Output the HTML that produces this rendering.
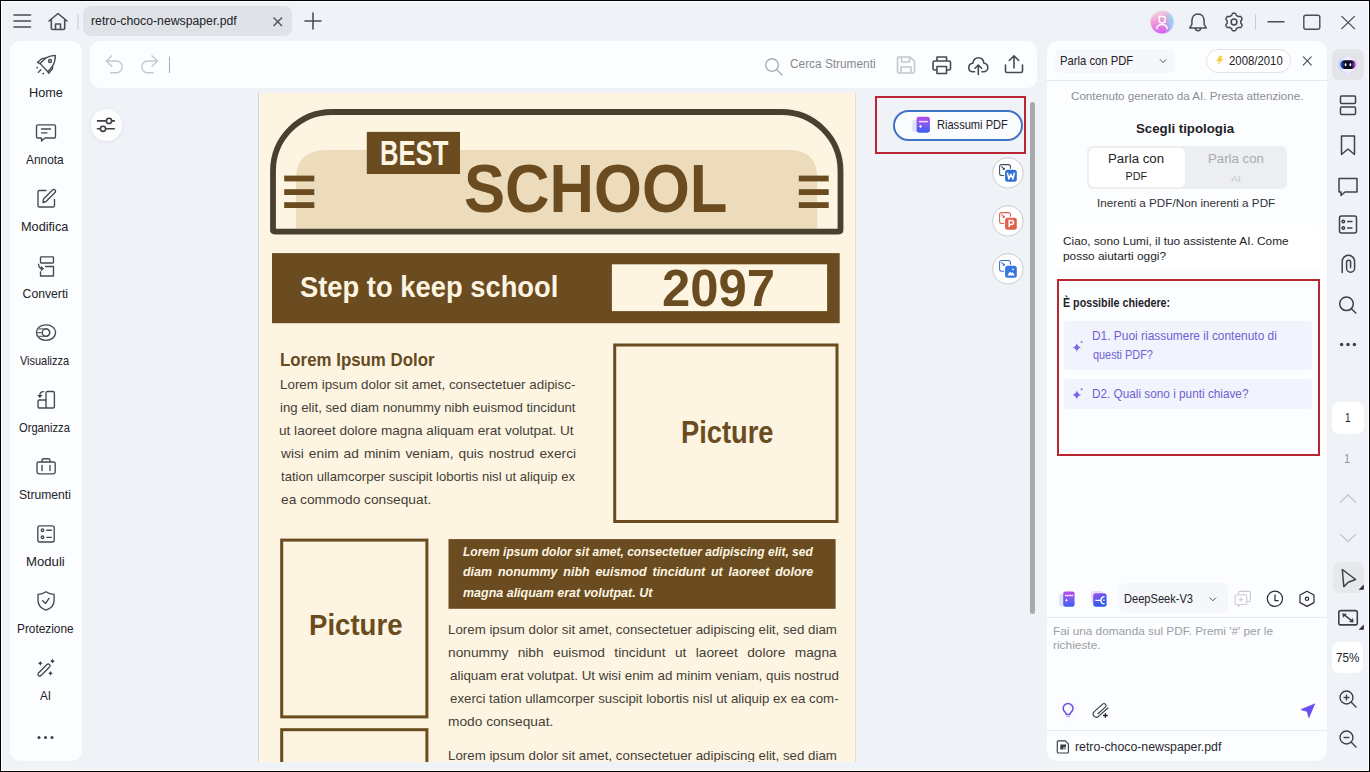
<!DOCTYPE html>
<html><head><meta charset="utf-8">
<style>
*{box-sizing:border-box;margin:0;padding:0}
html,body{width:1370px;height:772px;overflow:hidden}
body{position:relative;background:#eff2f7;font-family:"Liberation Sans",sans-serif;color:#222}
.a{position:absolute;white-space:nowrap}
svg{position:absolute;overflow:visible}
#frame{position:absolute;left:0;top:0;width:1370px;height:772px;border:1px solid #000;z-index:100;pointer-events:none}
#frame2{position:absolute;left:1px;top:1px;width:1368px;height:770px;border:1px solid #fff;z-index:100;pointer-events:none}
.side{position:absolute;left:10px;top:41px;width:72px;height:720px;background:#fcfdfe;border-radius:10px}
.ut{position:absolute;white-space:pre;transform-origin:0 0}
.lbl{position:absolute;left:10px;width:72px;text-align:center;font-size:12.3px;line-height:16px;color:#1f1f25}
.toolbar{position:absolute;left:90px;top:41px;width:947px;height:47px;background:#fcfdfe;border-radius:10px}
.page{position:absolute;left:259px;top:93px;width:596px;height:669px;background:#fdf5e2;overflow:hidden;box-shadow:-1px 0 0 #d3d3d3, 1px 0 0 #dcdde0}
.ai{position:absolute;left:1047px;top:41px;width:280px;height:720px;background:#fcfdfe;border-radius:10px}
.pt{position:absolute;white-space:pre;transform-origin:0 0}
</style></head>
<body>
<div id="frame"></div><div id="frame2"></div>

<!-- ===== TITLE BAR ===== -->
<svg style="left:0;top:0" width="1370" height="40">
  <g stroke="#4a4d55" stroke-width="1.6" fill="none" stroke-linecap="round">
    <line x1="14" y1="15" x2="30.5" y2="15"/><line x1="14" y1="21" x2="30.5" y2="21"/><line x1="14" y1="27" x2="30.5" y2="27"/>
    <path d="M49 21 L58 13.5 L67 21 M51.3 19.2 V28 a1.5 1.5 0 0 0 1.5 1.5 H63.2 a1.5 1.5 0 0 0 1.5 -1.5 V19.2 M55.5 29.5 V24 H60.5 V29.5" stroke-linejoin="round"/>
    <line x1="78" y1="14.5" x2="78" y2="29.5" stroke="#c9ccd2" stroke-width="1"/>
    <!-- plus -->
    <line x1="313" y1="13" x2="313" y2="29" stroke-width="1.6"/><line x1="305" y1="21" x2="321" y2="21" stroke-width="1.6"/>
    <!-- right -->
    <path d="M1198 13.9 C1194 13.9 1191.9 17.3 1191.9 21.1 V24.3 L1189.7 27.9 H1206.3 L1204.1 24.3 V21.1 C1204.1 17.3 1202 13.9 1198 13.9 Z M1195.3 28.1 a2.7 2.7 0 0 0 5.4 0" stroke-linejoin="round" stroke-width="1.5"/>
    <line x1="1255.5" y1="15" x2="1255.5" y2="29.5" stroke="#c9ccd2" stroke-width="1"/>
    <line x1="1268" y1="21.8" x2="1284" y2="21.8" stroke-width="1.4"/>
    <rect x="1303.8" y="15.2" width="16" height="14" rx="2" stroke-width="1.4"/>
    <path d="M1341.8 16.4 L1354.5 28.6 M1354.5 16.4 L1341.8 28.6" stroke-width="1.3"/>
  </g>
  <g transform="translate(1234,22)" stroke="#45484e" stroke-width="1.5" fill="none">
    <path d="M6.90 0.00 L6.90 0.18 L6.89 0.36 L6.88 0.54 L6.86 0.72 L6.84 0.90 L6.85 1.08 L6.93 1.28 L7.08 1.51 L7.30 1.75 L7.53 2.02 L7.76 2.30 L7.95 2.58 L8.06 2.85 L8.09 3.11 L8.04 3.33 L7.95 3.54 L7.85 3.75 L7.75 3.95 L7.65 4.15 L7.53 4.35 L7.42 4.55 L7.30 4.74 L7.17 4.93 L7.04 5.11 L6.90 5.30 L6.74 5.45 L6.50 5.55 L6.21 5.59 L5.87 5.57 L5.52 5.52 L5.16 5.44 L4.85 5.38 L4.58 5.36 L4.36 5.39 L4.20 5.47 L4.06 5.58 L3.91 5.69 L3.76 5.79 L3.61 5.88 L3.45 5.98 L3.29 6.06 L3.13 6.15 L2.97 6.23 L2.81 6.30 L2.64 6.37 L2.48 6.47 L2.35 6.64 L2.24 6.89 L2.13 7.19 L2.02 7.53 L1.89 7.87 L1.74 8.17 L1.56 8.41 L1.36 8.56 L1.14 8.63 L0.91 8.65 L0.68 8.67 L0.46 8.69 L0.23 8.70 L0.00 8.70 L-0.23 8.70 L-0.46 8.69 L-0.68 8.67 L-0.91 8.65 L-1.14 8.63 L-1.36 8.56 L-1.56 8.41 L-1.74 8.17 L-1.89 7.87 L-2.02 7.53 L-2.13 7.19 L-2.24 6.89 L-2.35 6.64 L-2.48 6.47 L-2.64 6.37 L-2.81 6.30 L-2.97 6.23 L-3.13 6.15 L-3.29 6.06 L-3.45 5.98 L-3.61 5.88 L-3.76 5.79 L-3.91 5.69 L-4.06 5.58 L-4.20 5.47 L-4.36 5.39 L-4.58 5.36 L-4.85 5.38 L-5.16 5.44 L-5.52 5.52 L-5.87 5.57 L-6.21 5.59 L-6.50 5.55 L-6.74 5.45 L-6.90 5.30 L-7.04 5.11 L-7.17 4.93 L-7.30 4.74 L-7.42 4.55 L-7.53 4.35 L-7.65 4.15 L-7.75 3.95 L-7.85 3.75 L-7.95 3.54 L-8.04 3.33 L-8.09 3.11 L-8.06 2.85 L-7.95 2.58 L-7.76 2.30 L-7.53 2.02 L-7.30 1.75 L-7.08 1.51 L-6.93 1.28 L-6.85 1.08 L-6.84 0.90 L-6.86 0.72 L-6.88 0.54 L-6.89 0.36 L-6.90 0.18 L-6.90 0.00 L-6.90 -0.18 L-6.89 -0.36 L-6.88 -0.54 L-6.86 -0.72 L-6.84 -0.90 L-6.85 -1.08 L-6.93 -1.28 L-7.08 -1.51 L-7.30 -1.75 L-7.53 -2.02 L-7.76 -2.30 L-7.95 -2.58 L-8.06 -2.85 L-8.09 -3.11 L-8.04 -3.33 L-7.95 -3.54 L-7.85 -3.75 L-7.75 -3.95 L-7.65 -4.15 L-7.53 -4.35 L-7.42 -4.55 L-7.30 -4.74 L-7.17 -4.93 L-7.04 -5.11 L-6.90 -5.30 L-6.74 -5.45 L-6.50 -5.55 L-6.21 -5.59 L-5.87 -5.57 L-5.52 -5.52 L-5.16 -5.44 L-4.85 -5.38 L-4.58 -5.36 L-4.36 -5.39 L-4.20 -5.47 L-4.06 -5.58 L-3.91 -5.69 L-3.76 -5.79 L-3.61 -5.88 L-3.45 -5.98 L-3.29 -6.06 L-3.13 -6.15 L-2.97 -6.23 L-2.81 -6.30 L-2.64 -6.37 L-2.48 -6.47 L-2.35 -6.64 L-2.24 -6.89 L-2.13 -7.19 L-2.02 -7.53 L-1.89 -7.87 L-1.74 -8.17 L-1.56 -8.41 L-1.36 -8.56 L-1.14 -8.63 L-0.91 -8.65 L-0.68 -8.67 L-0.46 -8.69 L-0.23 -8.70 L-0.00 -8.70 L0.23 -8.70 L0.46 -8.69 L0.68 -8.67 L0.91 -8.65 L1.14 -8.63 L1.36 -8.56 L1.56 -8.41 L1.74 -8.17 L1.89 -7.87 L2.02 -7.53 L2.13 -7.19 L2.24 -6.89 L2.35 -6.64 L2.48 -6.47 L2.64 -6.37 L2.81 -6.30 L2.97 -6.23 L3.13 -6.15 L3.29 -6.06 L3.45 -5.98 L3.61 -5.88 L3.76 -5.79 L3.91 -5.69 L4.06 -5.58 L4.20 -5.47 L4.36 -5.39 L4.58 -5.36 L4.85 -5.38 L5.16 -5.44 L5.52 -5.52 L5.87 -5.57 L6.21 -5.59 L6.50 -5.55 L6.74 -5.45 L6.90 -5.30 L7.04 -5.11 L7.17 -4.93 L7.30 -4.74 L7.42 -4.55 L7.53 -4.35 L7.65 -4.15 L7.75 -3.95 L7.85 -3.75 L7.95 -3.54 L8.04 -3.33 L8.09 -3.11 L8.06 -2.85 L7.95 -2.58 L7.76 -2.30 L7.53 -2.02 L7.30 -1.75 L7.08 -1.51 L6.93 -1.28 L6.85 -1.08 L6.84 -0.90 L6.86 -0.72 L6.88 -0.54 L6.89 -0.36 L6.90 -0.18 Z" stroke-linejoin="round"/>
    <circle r="2.9"/>
  </g>
  <defs>
    <linearGradient id="avg" x1="0.2" y1="0" x2="0.5" y2="1">
      <stop offset="0" stop-color="#f8e0e2"/><stop offset="0.45" stop-color="#ef9ad8"/><stop offset="1" stop-color="#d95ff0"/>
    </linearGradient>
    <linearGradient id="avc" x1="0" y1="0" x2="1" y2="0">
      <stop offset="0.6" stop-color="#80e8f6" stop-opacity="0"/><stop offset="1" stop-color="#80e8f6" stop-opacity="1"/>
    </linearGradient>
  </defs>
  <circle cx="1162" cy="22" r="11.5" fill="url(#avg)"/><circle cx="1162" cy="22" r="11.5" fill="url(#avc)"/>
  <g stroke="#fff" stroke-width="1.5" fill="none" stroke-linecap="round"><path d="M1159.2 16.5 H1163.2 a2 2 0 0 1 2 2 V20.2 a2.8 2.8 0 0 1 -2.8 2.8 H1162 a2.8 2.8 0 0 1 -2.8 -2.8 Z"/><path d="M1156.8 28.6 C1157.3 25.8 1159.3 24.6 1162 24.6 C1164.7 24.6 1166.7 25.8 1167.2 28.6"/></g>
</svg>
<div class="a" style="left:83px;top:6px;width:209px;height:30px;background:#dfe2e7;border-radius:8px"></div>
<svg style="left:0;top:0" width="400" height="40"><path d="M273.5 17.5 L282 26 M282 17.5 L273.5 26" stroke="#4a4d55" stroke-width="1.3" fill="none"/></svg>

<!-- ===== LEFT SIDEBAR ===== -->
<div class="side"></div>
<svg style="left:0;top:0" width="90" height="772">
  <g stroke="#45484e" stroke-width="1.35" fill="none" stroke-linecap="round" stroke-linejoin="round">
    <!-- rocket -->
    <path d="M40.1 63.6 L47.9 71.8 L52.5 66.3 C54.5 63 55.5 59 55.3 55.4 C51.5 55.4 48.5 56.5 45.5 58.2 Z"/>
    <path d="M40.1 63.6 L37.4 62.4 L42 58.6 L45.5 58.2 M47.9 71.8 L48.7 73.3 L52.6 68.6 L52.5 66.3"/>
    <circle cx="50" cy="61" r="1.5"/>
    <path d="M38.4 72.4 L40.9 69.8"/>
    <!-- comment -->
    <path d="M38 124.8 H54 a1.5 1.5 0 0 1 1.5 1.5 V136.5 a1.5 1.5 0 0 1 -1.5 1.5 H45 L41.5 141 V138 H38 a1.5 1.5 0 0 1 -1.5 -1.5 V126.3 a1.5 1.5 0 0 1 1.5 -1.5 Z"/>
    <path d="M41.5 129 H50.5 M41.5 132.8 H47"/>
    <!-- modifica -->
    <path d="M46 190.5 H39.5 a1.5 1.5 0 0 0 -1.5 1.5 V205.5 a1.5 1.5 0 0 0 1.5 1.5 H53 a1.5 1.5 0 0 0 1.5 -1.5 V199.5"/>
    <path d="M43 202.5 L43.5 199 L52.5 190 a1.6 1.6 0 0 1 2.5 2.5 L46 201.5 Z"/>
    <!-- converti -->
    <rect x="40.5" y="256.8" width="13" height="6.2" rx="0.8"/>
    <path d="M45.5 266.5 H53.5 V276 H40.5 V271.8"/>
    <path d="M38.6 264.2 Q38.6 268.6 42.5 268.6"/>
    <!-- visualizza -->
    <ellipse cx="46" cy="332.6" rx="9.6" ry="7.8"/>
    <path d="M37.5 328.9 H46 A3.7 3.7 0 0 1 46 336.3 H37.5 M36.8 332.6 H42.3" stroke="#6a6d72"/>
    <circle cx="46" cy="332.6" r="3.7"/>
    <!-- organizza -->
    <rect x="46" y="391.5" width="8.4" height="16.5" rx="1.5"/>
    <path d="M46 400 H39.5 a1.5 1.5 0 0 0 -1.5 1.5 V406.5 a1.5 1.5 0 0 0 1.5 1.5 H46"/>
    <path d="M43.6 391.6 C41 391.6 39.9 392.6 39.9 395"/>
    <!-- strumenti -->
    <rect x="37" y="462" width="18.2" height="11.8" rx="1.8"/>
    <path d="M42 462 V460.5 a1.8 1.8 0 0 1 1.8 -1.8 H48.2 a1.8 1.8 0 0 1 1.8 1.8 V462"/>
    <path d="M42 465.5 V470.5 M50 465.5 V470.5" stroke-width="1.7" stroke="#6a6d72"/>
    <!-- moduli -->
    <rect x="37.8" y="525.8" width="16.4" height="16.2" rx="2"/>
    <circle cx="42.5" cy="530.2" r="1.3"/><circle cx="42.5" cy="537.3" r="1.3"/>
    <path d="M46.8 530.2 H51.3 M46.8 537.3 H51.3"/>
    <!-- protezione -->
    <path d="M46 591.8 C43.5 593.6 41 594.3 38 594.4 V600.5 C38 605 41.5 608.5 46 610.2 C50.5 608.5 54.1 605 54.1 600.5 V594.4 C51 594.3 48.5 593.6 46 591.8 Z"/>
    <path d="M42.6 600.7 L45.6 603.4 L49 598.3"/>
    <!-- AI wand -->
    <g transform="rotate(-45 44 670)"><rect x="36.2" y="668.2" width="15.6" height="3.6" rx="1.8"/></g>
  </g>
  <g fill="#3a3d42">
    <path d="M37.3 63.3 l0 0"/>
    <circle cx="37.2" cy="67.6" r="0.85"/><circle cx="43.2" cy="73.6" r="0.85"/>
    <path d="M37.3 395 H42.5 L39.9 397.9 Z"/>
    <path d="M40.8 268.6 V265.8 L44 268.6 L40.8 271.4 Z" fill="#45484e"/>
    <path d="M40.3 660.9 Q40.827999999999996 662.7719999999999 42.699999999999996 663.3 Q40.827999999999996 663.828 40.3 665.6999999999999 Q39.772 663.828 37.9 663.3 Q39.772 662.7719999999999 40.3 660.9 Z"/><path d="M52.5 658.8000000000001 Q53.028 660.672 54.9 661.2 Q53.028 661.7280000000001 52.5 663.6 Q51.972 661.7280000000001 50.1 661.2 Q51.972 660.672 52.5 658.8000000000001 Z"/><path d="M50.5 670.9 Q51.028 672.7719999999999 52.9 673.3 Q51.028 673.828 50.5 675.6999999999999 Q49.972 673.828 48.1 673.3 Q49.972 672.7719999999999 50.5 670.9 Z"/>
    <circle cx="39" cy="737.5" r="1.5"/><circle cx="45.5" cy="737.5" r="1.5"/><circle cx="52" cy="737.5" r="1.5"/>
  </g>
</svg>

<!-- ===== TOOLBAR ===== -->
<div class="toolbar"></div>
<svg style="left:0;top:0" width="1050" height="150">
  <g stroke="#c4c7cc" stroke-width="1.6" fill="none" stroke-linecap="round" stroke-linejoin="round">
    <path d="M111.8 55.7 L106.3 61 L111.8 66.2 M106.5 61 H116.4 A5.85 5.85 0 0 1 116.4 72.7 H110.7" stroke-width="1.4"/>
    <path d="M152 55.7 L157.5 61 L152 66.2 M157.3 61 H147.6 A5.85 5.85 0 0 0 147.6 72.7 H153.1" stroke-width="1.4"/>
    <line x1="169.5" y1="57.2" x2="169.5" y2="72.7" stroke-width="1" stroke="#a9acb1"/>
    <circle cx="772" cy="65" r="6.3" stroke="#aaadb3" stroke-width="1.4"/><path d="M776.8 69.8 L782 75" stroke="#aaadb3" stroke-width="1.4"/>
    <path d="M899 57 H910 L914.5 61.5 V71.5 a1.5 1.5 0 0 1 -1.5 1.5 H899 a1.5 1.5 0 0 1 -1.5 -1.5 V58.5 a1.5 1.5 0 0 1 1.5 -1.5 Z M901.5 57 V62 H909.5 V57 M901 73 V67 H911 V73"/>
  </g>
  <g stroke="#46494f" stroke-width="1.6" fill="none" stroke-linecap="round" stroke-linejoin="round">
    <path d="M937 61 V57 H946.5 V61 M937 70 H934.5 a1.5 1.5 0 0 1 -1.5 -1.5 V62.5 a1.5 1.5 0 0 1 1.5 -1.5 H949 a1.5 1.5 0 0 1 1.5 1.5 V68.5 a1.5 1.5 0 0 1 -1.5 1.5 H946.5 M937 66.5 H946.5 V73.5 H937 Z"/>
    <path d="M974.5 71.8 H973 C970.3 71.8 968.8 69.8 968.8 67.5 C968.8 65.2 970.5 63.5 972.8 63.3 C973.3 60 975.5 57.8 978.3 57.8 C981.3 57.8 983.6 60 983.9 63.3 C986.2 63.5 987.8 65.2 987.8 67.5 C987.8 69.8 986.2 71.8 983.5 71.8 H982 M978.3 74.5 V65.2 M975 68.3 L978.3 65 L981.6 68.3"/>
    <path d="M1005.5 65 V71 a1.5 1.5 0 0 0 1.5 1.5 H1021 a1.5 1.5 0 0 0 1.5 -1.5 V65 M1014 68 V56 M1009.3 60.5 L1014 55.8 L1018.7 60.5"/>
  </g>
</svg>

<div class="a" style="left:90.5px;top:109.2px;width:31.4px;height:31.4px;border-radius:50%;background:#fdfdfe;box-shadow:0 1px 4px rgba(30,40,60,0.08)"></div>
<svg style="left:0;top:0" width="200" height="200">
  <g stroke="#3c3f45" stroke-width="1.6" fill="none" stroke-linecap="round">
    <path d="M97.5 120.9 H106.3 M111.7 120.9 H114.3 M97.5 128.8 H100.3 M105.7 128.8 H114.3"/>
    <circle cx="109" cy="120.9" r="2.6" fill="#fff"/>
    <circle cx="103" cy="128.8" r="2.6" fill="#fff"/>
  </g>
</svg>
<!-- ===== DOC ===== -->
<div class="page">
<svg style="left:0;top:0" width="597" height="670">
  <path d="M37 135.7 V87 Q37 57 67 57 H530 Q558.2 57 558.2 85 V135.7 Z" fill="#ecdcbc"/>
  <path d="M14 138.6 V78 A59 59 0 0 1 73 19 H522.5 A59 59 0 0 1 581.5 78 V136.6 Q581.5 138.6 579.5 138.6 H16 Q14 138.6 14 136.6 Z" fill="none" stroke="#4a4030" stroke-width="5.8"/>
  <g fill="#6a4c20">
    <rect x="25.19999999999999" y="82.6" width="30.1" height="5.8"/>
    <rect x="25.19999999999999" y="96.19999999999999" width="30.1" height="5.8"/>
    <rect x="25.19999999999999" y="109.19999999999999" width="30.1" height="5.8"/>
    <rect x="539.8" y="82.6" width="29.9" height="5.8"/>
    <rect x="539.8" y="96.19999999999999" width="29.9" height="5.8"/>
    <rect x="539.8" y="109.19999999999999" width="29.9" height="5.8"/>
    <rect x="107.80000000000001" y="38.900000000000006" width="93.2" height="42.1"/>
    <rect x="13" y="160.1" width="567.7" height="70.1"/>
    <rect x="189.5" y="446.1" width="387.1" height="69.7"/>
  </g>
  <rect x="352.9" y="171.3" width="215.2" height="46.8" fill="#fdf5e2"/>
  <g fill="none" stroke="#6a4c20" stroke-width="3">
    <rect x="355.70000000000005" y="252" width="222.3" height="176.5"/>
    <rect x="22.69999999999999" y="447.1" width="145.2" height="176.8"/>
    <rect x="22.69999999999999" y="636.7" width="145.2" height="100"/>
  </g>
</svg>
<div class="pt" style="left:120.85px;top:39.17px;font-size:35.32px;line-height:42.38px;width:94.14px;color:#fdf5e2;transform:scaleX(0.7250);font-weight:700;">BEST</div>
<div class="pt" style="left:204.60px;top:55.26px;font-size:68.60px;line-height:82.33px;width:293.44px;color:#6a4c20;transform:scaleX(0.8979);font-weight:700;">SCHOOL</div>
<div class="pt" style="left:40.57px;top:176.41px;font-size:29.36px;line-height:35.23px;width:277.34px;color:#fdf5e2;transform:scaleX(0.9316);font-weight:700;">Step to keep school</div>
<div class="pt" style="left:403.04px;top:164.23px;font-size:51.74px;line-height:62.09px;width:115.09px;color:#6a4c20;transform:scaleX(0.9820);font-weight:700;">2097</div>
<div class="pt" style="left:21.33px;top:256.99px;font-size:17.44px;line-height:20.93px;width:159.86px;color:#654a22;transform:scaleX(0.9667);font-weight:700;">Lorem Ipsum Dolor</div>
<div class="pt" style="left:422.01px;top:321.01px;font-size:30.52px;line-height:36.63px;width:103.45px;color:#6a4c20;transform:scaleX(0.8931);font-weight:700;">Picture</div>
<div class="pt" style="left:50.05px;top:513.70px;font-size:29.80px;line-height:35.76px;width:100.97px;color:#6a4c20;transform:scaleX(0.9255);font-weight:700;">Picture</div>
<div class="pt" style="left:20.51px;top:285.01px;font-size:12.25px;line-height:14.7px;width:270.30px;color:#443e37;transform:scaleX(1.0929);">Lorem ipsum dolor sit amet, consectetuer adipisc-</div>
<div class="pt" style="left:20.52px;top:308.01px;font-size:12.25px;line-height:14.7px;width:274.42px;color:#443e37;transform:scaleX(1.0769);">ing elit, sed diam nonummy nibh euismod tincidunt</div>
<div class="pt" style="left:20.49px;top:331.01px;font-size:12.25px;line-height:14.7px;width:265.58px;color:#443e37;transform:scaleX(1.1094);">ut laoreet dolore magna aliquam erat volutpat. Ut</div>
<div class="pt" style="left:21.60px;top:354.01px;font-size:12.25px;line-height:14.7px;width:263.48px;color:#443e37;transform:scaleX(1.1200);text-align:justify;text-align-last:justify;">wisi enim ad minim veniam, quis nostrud exerci</div>
<div class="pt" style="left:21.60px;top:377.01px;font-size:12.25px;line-height:14.7px;width:275.08px;color:#443e37;transform:scaleX(1.0691);">tation ullamcorper suscipit lobortis nisl ut aliquip ex</div>
<div class="pt" style="left:21.60px;top:400.01px;font-size:12.25px;line-height:14.7px;width:134.16px;color:#443e37;transform:scaleX(1.1200);">ea commodo consequat.</div>
<div class="pt" style="left:203.80px;top:450.50px;font-size:13.00px;line-height:15.6px;width:378.55px;color:#fdf5e2;transform:scaleX(0.9240);font-weight:700;font-style:italic;">Lorem ipsum dolor sit amet, consectetuer adipiscing elit, sed</div>
<div class="pt" style="left:203.80px;top:471.40px;font-size:13.00px;line-height:15.6px;width:364.92px;color:#fdf5e2;transform:scaleX(0.9600);font-weight:700;font-style:italic;text-align:justify;text-align-last:justify;">diam nonummy nibh euismod tincidunt ut laoreet dolore</div>
<div class="pt" style="left:203.80px;top:492.30px;font-size:13.00px;line-height:15.6px;width:197.20px;color:#fdf5e2;transform:scaleX(0.9600);font-weight:700;font-style:italic;">magna aliquam erat volutpat. Ut</div>
<div class="pt" style="left:189.41px;top:530.41px;font-size:12.25px;line-height:14.7px;width:358.14px;color:#443e37;transform:scaleX(1.0860);">Lorem ipsum dolor sit amet, consectetuer adipiscing elit, sed diam</div>
<div class="pt" style="left:189.38px;top:553.31px;font-size:12.25px;line-height:14.7px;width:347.05px;color:#443e37;transform:scaleX(1.1200);text-align:justify;text-align-last:justify;">nonummy nibh euismod tincidunt ut laoreet dolore magna</div>
<div class="pt" style="left:190.50px;top:576.21px;font-size:12.25px;line-height:14.7px;width:356.09px;color:#443e37;transform:scaleX(1.0921);">aliquam erat volutpat. Ut wisi enim ad minim veniam, quis nostrud</div>
<div class="pt" style="left:190.50px;top:599.11px;font-size:12.25px;line-height:14.7px;width:358.81px;color:#443e37;transform:scaleX(1.0830);">exerci tation ullamcorper suscipit lobortis nisl ut aliquip ex ea com-</div>
<div class="pt" style="left:189.38px;top:622.01px;font-size:12.25px;line-height:14.7px;width:93.98px;color:#443e37;transform:scaleX(1.1200);">modo consequat.</div>
<div class="pt" style="left:189.41px;top:655.81px;font-size:12.25px;line-height:14.7px;width:358.14px;color:#443e37;transform:scaleX(1.0860);">Lorem ipsum dolor sit amet, consectetuer adipiscing elit, sed diam</div>
</div>
<!-- ===== RIASS ===== -->
<div class="a" style="left:1030px;top:102px;width:5px;height:512px;background:#a8a9ad;border-radius:2.5px"></div>
<div class="a" style="left:875px;top:96px;width:151px;height:57.5px;border:2px solid #bb2530"></div>
<div class="a" style="left:893px;top:109.5px;width:130px;height:31px;border:2px solid #4073c6;border-radius:16px;background:#fbfcfe"></div>
<svg style="left:0;top:0" width="1370" height="772">
  <defs><linearGradient id="g3" x1="0" y1="0" x2="0" y2="1"><stop offset="0" stop-color="#b84ae6"/><stop offset="0.5" stop-color="#7d5cf2"/><stop offset="1" stop-color="#3a5ef0"/></linearGradient></defs>
  <rect x="912.2" y="120.1" width="6" height="12.1" rx="1.8" fill="#dfe3f7"/>
  <rect x="916.6" y="116.7" width="13.3" height="16" rx="2.4" fill="url(#g3)"/>
  <path d="M918.9 121.6 H927.9" stroke="#f7dcff" stroke-width="1.5"/>
  <path d="M920.5 124.4 Q920.8 126 922.4 126.3 Q920.8 126.6 920.5 128.2 Q920.2 126.6 918.6 126.3 Q920.2 126 920.5 124.4 Z" fill="#fff"/>
  <g transform="translate(0,0.0)">
    <circle cx="1007.9" cy="172.9" r="15.3" fill="#fff" stroke="#c9cbcf" stroke-width="1"/>
    <rect x="999.6" y="164.6" width="10.8" height="10.8" rx="2" fill="none" stroke="#3e4a66" stroke-width="1.05"/>
    <path d="M1001.4 166.4 L1004.3 169.3" stroke="#3e4a66" stroke-width="1.05"/>
    <path d="M1004.9 167.3 V169.9 H1002.3 Z" fill="#3e4a66"/>
    <rect x="1004.1" y="168.8" width="13.7" height="14" rx="3" fill="#fff"/>
    <rect x="1005.1" y="169.8" width="11.7" height="12" rx="2.5" fill="#2f6fd6"/>
    <path d="M1007.4 172.6 L1008.9 179 L1010.9 174.2 L1012.9 179 L1014.4 172.6" stroke="#fff" stroke-width="1.5" fill="none" stroke-linejoin="round"/>
  </g>
<g transform="translate(0,48.0)">
    <circle cx="1007.9" cy="172.9" r="15.3" fill="#fff" stroke="#c9cbcf" stroke-width="1"/>
    <rect x="999.6" y="164.6" width="10.8" height="10.8" rx="2" fill="none" stroke="#d9604e" stroke-width="1.05"/>
    <path d="M1001.4 166.4 L1004.3 169.3" stroke="#d9604e" stroke-width="1.05"/>
    <path d="M1004.9 167.3 V169.9 H1002.3 Z" fill="#d9604e"/>
    <rect x="1004.1" y="168.8" width="13.7" height="14" rx="3" fill="#fff"/>
    <rect x="1005.1" y="169.8" width="11.7" height="12" rx="2.5" fill="#e0604a"/>
    <path d="M1009.2 179.2 V172.6 H1011.6 A1.9 1.9 0 0 1 1011.6 176.4 H1009.2" stroke="#fff" stroke-width="1.5" fill="none"/>
  </g>
<g transform="translate(0,95.9)">
    <circle cx="1007.9" cy="172.9" r="15.3" fill="#fff" stroke="#c9cbcf" stroke-width="1"/>
    <rect x="999.6" y="164.6" width="10.8" height="10.8" rx="2" fill="none" stroke="#3a6bc8" stroke-width="1.05"/>
    <path d="M1001.4 166.4 L1004.3 169.3" stroke="#3a6bc8" stroke-width="1.05"/>
    <path d="M1004.9 167.3 V169.9 H1002.3 Z" fill="#3a6bc8"/>
    <rect x="1004.1" y="168.8" width="13.7" height="14" rx="3" fill="#fff"/>
    <rect x="1005.1" y="169.8" width="11.7" height="12" rx="2.5" fill="#3575e0"/>
    <path d="M1007.3 179.6 L1010 175.6 L1011.6 177.4 L1012.7 176.2 L1014.8 179.6 Z" fill="#fff"/><circle cx="1013" cy="173.4" r="0.9" fill="#fff"/>
  </g>
</svg>

<!-- ===== AI PANEL ===== -->
<div class="ai"></div>
<div class="a" style="left:1055px;top:49px;width:120px;height:24px;background:#f6f7fa;border-radius:6px"></div>
<div class="a" style="left:1206px;top:49px;width:85px;height:24px;border:1px solid #dfe2e8;border-radius:12px;background:#fff"></div>
<svg style="left:0;top:0" width="1370" height="772">
  <path d="M1160 59.3 L1163.1 62.6 L1166.2 59.3" stroke="#55585e" stroke-width="1" fill="none"/>
  <path d="M1219.6 56 L1216.6 60.9 H1219.3 L1218.2 64.3 L1223.1 59.1 H1220.4 L1222.2 56 Z" fill="#f4cf48" stroke="#f4cf48" stroke-width="0.6" stroke-linejoin="round"/>
  <path d="M1303 56.5 L1311.6 65.4 M1311.6 56.5 L1303 65.4" stroke="#3a3d43" stroke-width="1.05" fill="none"/>
  <line x1="1046" y1="80.5" x2="1327" y2="80.5" stroke="#e6e9ee" stroke-width="1"/>
</svg>
<div class="a" style="left:1087px;top:146px;width:200px;height:43px;background:#eceef2;border-radius:6px"></div>
<div class="a" style="left:1089px;top:148px;width:96px;height:39px;background:#fff;border-radius:5px"></div>
<div class="a" style="left:1054.5px;top:225px;width:265px;height:43px;background:#fff;border-radius:6px"></div>
<div class="a" style="left:1057px;top:278.5px;width:263px;height:177.5px;border:2px solid #bb2530"></div>
<div class="a" style="left:1064px;top:321px;width:248px;height:49px;background:#f1f3fd;border-radius:3px"></div>
<div class="a" style="left:1064px;top:379px;width:248px;height:30px;background:#f1f3fd;border-radius:3px"></div>
<svg style="left:0;top:0" width="1370" height="772">
  <g fill="#7a67e6">
    <path d="M1076.8 343.3 Q1077.66 346.74 1081.1 347.6 Q1077.66 348.46 1076.8 351.90000000000003 Q1075.94 348.46 1072.5 347.6 Q1075.94 346.74 1076.8 343.3 Z"/><circle cx="1081.6" cy="341.9" r="0.95"/>
    <path d="M1076.8 390.59999999999997 Q1077.66 394.04 1081.1 394.9 Q1077.66 395.76 1076.8 399.2 Q1075.94 395.76 1072.5 394.9 Q1075.94 394.04 1076.8 390.59999999999997 Z"/><circle cx="1081.6" cy="389.2" r="0.95"/>
  </g>
</svg>
<!-- bottom -->
<div class="a" style="left:1119px;top:583px;width:109px;height:30px;background:#f6f7fa;border-radius:6px"></div>
<svg style="left:0;top:0" width="1370" height="772">
  <defs>
    <linearGradient id="g1" x1="0" y1="0" x2="0" y2="1"><stop offset="0" stop-color="#b84ae6"/><stop offset="0.5" stop-color="#7d5cf2"/><stop offset="1" stop-color="#3a5ef0"/></linearGradient>
    <linearGradient id="g2" x1="0" y1="0" x2="0.4" y2="1"><stop offset="0" stop-color="#a34ee8"/><stop offset="0.5" stop-color="#5a5cf0"/><stop offset="1" stop-color="#2c5ee8"/></linearGradient>
  </defs>
  <rect x="1059.3" y="594" width="6" height="12.4" rx="1.8" fill="#dfe3f7"/>
  <rect x="1063.2" y="591.6" width="11.4" height="15.1" rx="2.2" fill="url(#g1)"/>
  <path d="M1064.9 595.5 H1073.2" stroke="#f6dcff" stroke-width="1.5"/>
  <path d="M1066.5 598.6 Q1066.8 600 1068.1 600.3 Q1066.8 600.6 1066.5 602 Q1066.2 600.6 1064.9 600.3 Q1066.2 600 1066.5 598.6 Z" fill="#fff"/>
  <rect x="1091.2" y="591.1" width="12" height="12" rx="2.5" fill="#e6def8"/>
  <rect x="1093.2" y="593.3" width="13.4" height="13.4" rx="2.6" fill="url(#g2)"/>
  <path d="M1103.6 596.6 A3.9 3.9 0 0 0 1103.6 604 M1095.4 600.3 H1100.6" stroke="#fff" stroke-width="1.3" fill="none"/>
  <g fill="#fff"><circle cx="1103.9" cy="596.8" r="0.8"/><circle cx="1103.9" cy="600.3" r="0.8"/><circle cx="1103.9" cy="603.8" r="0.8"/></g>
  <path d="M1209.7 597.6 L1212.9 600.8 L1216.1 597.6" stroke="#55585e" stroke-width="1" fill="none"/>
  <g stroke="#c9cbd0" stroke-width="1.1" fill="none" stroke-linejoin="round">
    <path d="M1238.6 594.6 V593 a1.6 1.6 0 0 1 1.6 -1.6 H1248.8 a1.6 1.6 0 0 1 1.6 1.6 V600.2 a1.6 1.6 0 0 1 -1.6 1.6 H1246.9"/>
    <path d="M1236.7 594.8 H1245.2 a1.6 1.6 0 0 1 1.6 1.6 V602.9 a1.6 1.6 0 0 1 -1.6 1.6 H1240 L1238.3 606.3 V604.5 H1236.7 a1.6 1.6 0 0 1 -1.6 -1.6 V596.4 a1.6 1.6 0 0 1 1.6 -1.6 Z"/>
    <path d="M1241 597.5 V601.7 M1238.9 599.6 H1243.1"/>
  </g>
  <g stroke="#2a2c31" stroke-width="1.2" fill="none" stroke-linejoin="round">
    <circle cx="1274.9" cy="598.8" r="7.6"/>
    <path d="M1275 594.6 V600.7 H1278.6"/>
    <path d="M1307 591.2 L1314 595 V602.6 L1307 606.4 L1300 602.6 V595 Z"/>
    <circle cx="1307" cy="598.8" r="1.7"/>
  </g>
  <line x1="1046" y1="617.5" x2="1327" y2="617.5" stroke="#e9ebef" stroke-width="1"/>
  <line x1="1046" y1="730.5" x2="1327" y2="730.5" stroke="#e9ebef" stroke-width="1"/>
  <circle cx="1068" cy="710" r="11.5" fill="#fafbfd"/>
  <path d="M1301 709.6 L1314.7 703.9 L1308.9 717.6 L1307.2 711.4 Z" fill="#6a4ef2" stroke="#6a4ef2" stroke-width="0.8" stroke-linejoin="round"/>
  <g stroke="#6651d8" stroke-width="1.5" fill="none" stroke-linejoin="round">
    <path d="M1066.4 714.6 C1066.2 712.4 1063.2 711.4 1063.2 708.4 a4.9 4.9 0 0 1 9.8 0 C1073 711.4 1070 712.4 1069.8 714.6 Z"/>
  </g>
  <path d="M1066.3 716.7 H1069.9" stroke="#b3a8ee" stroke-width="1.2"/>
  <path d="M1069.2 705.6 a2.8 2.8 0 0 1 1.6 2" stroke="#c9c0f5" stroke-width="0.9" fill="none"/>
  <g transform="translate(2.2,2.2) rotate(-42 1100.3 710.7)" stroke="#3a3d43" stroke-width="1.15" fill="none">
    <path d="M1108 710.7 H1095 a3.2 3.2 0 0 1 0 -6.4 H1106.3 a2 2 0 0 1 0 4 H1096"/>
  </g>
  <path d="M1105.4 713.2 V717.8 M1103.1 715.5 H1107.7" stroke="#1e1e22" stroke-width="1.3"/>
  <path d="M1058.3 740.8 H1065.3 L1068.4 743.9 V752 a1 1 0 0 1 -1 1 H1058.3 a1 1 0 0 1 -1 -1 V741.8 a1 1 0 0 1 1 -1 Z" stroke="#3a3d43" stroke-width="1.15" fill="none"/>
  <path d="M1060.3 744.5 H1066 V747 H1063 V749.6 H1060.3 Z" fill="#3a3d43"/>
  <rect x="1063" y="747" width="3" height="2.6" fill="#9a9ca0"/>
</svg>


<!-- ===== RIGHT STRIP ===== -->
<div class="a" style="left:1332.3px;top:49px;width:31.3px;height:30.6px;background:#e3e5e9;border-radius:7px"></div>
<svg style="left:0;top:0" width="1370" height="772">
  <defs>
    <radialGradient id="rb" cx="0.5" cy="0.5" r="0.5"><stop offset="0.6" stop-color="#f4f0ff"/><stop offset="1" stop-color="#e6e4f6"/></radialGradient>
    <linearGradient id="rbe" x1="0" y1="0" x2="1" y2="0"><stop offset="0" stop-color="#a8d4ff"/><stop offset="0.5" stop-color="#e8e4ff"/><stop offset="1" stop-color="#f7c0ee"/></linearGradient>
    <linearGradient id="pill" x1="0" y1="0" x2="1" y2="0"><stop offset="0" stop-color="#4060e0"/><stop offset="0.28" stop-color="#0c0c26"/><stop offset="0.72" stop-color="#0c0c26"/><stop offset="1" stop-color="#b060e0"/></linearGradient>
  </defs>
  <circle cx="1348" cy="64.7" r="9" fill="url(#rb)" stroke="url(#rbe)" stroke-width="1.2"/>
  <rect x="1340.2" y="60.2" width="15.6" height="8.8" rx="4.4" fill="url(#pill)"/>
  <ellipse cx="1345.6" cy="64.7" rx="0.95" ry="1.45" fill="#fff"/>
  <ellipse cx="1350.3" cy="64.7" rx="0.95" ry="1.45" fill="#fff"/>
  <g stroke="#3f4248" stroke-width="1.5" fill="none" stroke-linejoin="round">
    <rect x="1340.5" y="96" width="15" height="7.5" rx="1"/>
    <rect x="1340.5" y="107" width="15" height="7.5" rx="1"/>
    <path d="M1341.5 136 H1354.5 V154.5 L1348 149 L1341.5 154.5 Z"/>
    <path d="M1339 178.5 H1357 V192 H1345 L1341 195.5 V192 H1339 Z"/>
    <rect x="1339.5" y="216" width="17" height="17" rx="2"/>
    <path d="M1347 221.5 H1352.5 M1347 228 H1352.5"/>
    <circle cx="1343.3" cy="221.5" r="1.3"/><circle cx="1343.3" cy="228" r="1.3"/>
    <path d="M1342.2 272.5 V261.5 A6.2 6.2 0 0 1 1354.6 261.5 V268.2 A4 4 0 0 1 1346.6 268.2 V262.3 A2 2 0 0 1 1350.6 262.3 V267.5" stroke-linecap="round"/>
    <circle cx="1346.5" cy="303.8" r="6.8"/><path d="M1351.4 308.7 L1355.8 313" stroke-linecap="round"/>
  </g>
  <g fill="#3f4248"><circle cx="1341.6" cy="344.6" r="1.75"/><circle cx="1348" cy="344.6" r="1.75"/><circle cx="1354.4" cy="344.6" r="1.75"/></g>
</svg>
<div class="a" style="left:1332px;top:402px;width:32px;height:32px;background:#fff;border-radius:7px"></div>
<div class="a" style="left:1332.5px;top:562.3px;width:31.3px;height:31px;background:#e6e8ec;border-radius:7px"></div>
<svg style="left:0;top:0" width="1370" height="772">
  <g stroke="#c4c7cc" stroke-width="1.3" fill="none">
    <path d="M1340 502.5 L1348 495 L1356 502.5"/>
    <path d="M1340 534 L1348 541.5 L1356 534"/>
  </g>
  <g stroke="#3f4248" stroke-width="1.4" fill="none" stroke-linejoin="round">
    <path d="M1342.3 569.5 L1355.6 579.5 L1348.3 582.3 L1343.8 586.6 Z" stroke-width="1.5"/>
    <rect x="1338.8" y="610.6" width="18.5" height="14.3" rx="2" stroke-width="1.6"/><path d="M1342.3 613.3 L1346.8 613.9 L1342.9 617.8 Z M1353.6 622.4 L1349 621.9 L1353 618 Z" fill="#3f4248" stroke="none"/>
    <path d="M1344 614.6 L1352.2 621.2" stroke-width="1.5"/>
    <circle cx="1346.5" cy="697.5" r="6.5"/><path d="M1351.3 702.3 L1356 707" stroke-linecap="round"/><path d="M1343.5 697.5 H1349.5 M1346.5 694.5 V700.5"/>
    <circle cx="1346.5" cy="737.5" r="6.5"/><path d="M1351.3 742.3 L1356 747" stroke-linecap="round"/><path d="M1343.5 737.5 H1349.5"/>
  </g>
  <path d="M1363.8 584.5 V589.7 H1358.6 Z" fill="#2a2d33"/>
  <path d="M1363.8 624.6 V629.8 H1358.6 Z" fill="#2a2d33"/>
</svg>
<div class="a" style="left:1332px;top:642px;width:31px;height:31px;background:#fff;border-radius:7px"></div>

<!-- ===== UITEXT ===== -->
<div class="ut" style="left:90.82px;top:14.46px;font-size:12.50px;line-height:15.62px;color:#222228;transform:scaleX(0.9804);">retro-choco-newspaper.pdf</div>
<div class="ut" style="left:28.56px;top:85.75px;font-size:12.20px;line-height:15.25px;color:#222228;transform:scaleX(1.0419);">Home</div>
<div class="ut" style="left:26.30px;top:152.75px;font-size:12.20px;line-height:15.25px;color:#222228;transform:scaleX(0.9744);">Annota</div>
<div class="ut" style="left:21.46px;top:219.75px;font-size:12.20px;line-height:15.25px;color:#222228;transform:scaleX(1.0432);">Modifica</div>
<div class="ut" style="left:22.60px;top:286.75px;font-size:12.20px;line-height:15.25px;color:#222228;transform:scaleX(1.0000);">Converti</div>
<div class="ut" style="left:20.40px;top:353.75px;font-size:12.20px;line-height:15.25px;color:#222228;transform:scaleX(0.8982);">Visualizza</div>
<div class="ut" style="left:18.98px;top:420.75px;font-size:12.20px;line-height:15.25px;color:#222228;transform:scaleX(0.9164);">Organizza</div>
<div class="ut" style="left:18.61px;top:487.75px;font-size:12.20px;line-height:15.25px;color:#222228;transform:scaleX(0.9941);">Strumenti</div>
<div class="ut" style="left:25.52px;top:554.75px;font-size:12.20px;line-height:15.25px;color:#222228;transform:scaleX(1.0794);">Moduli</div>
<div class="ut" style="left:16.63px;top:621.75px;font-size:12.20px;line-height:15.25px;color:#222228;transform:scaleX(0.9702);">Protezione</div>
<div class="ut" style="left:40.00px;top:688.75px;font-size:12.20px;line-height:15.25px;color:#222228;transform:scaleX(0.9545);">AI</div>
<div class="ut" style="left:789.85px;top:57.37px;font-size:12.48px;line-height:15.6px;color:#86898f;transform:scaleX(0.9500);">Cerca Strumenti</div>
<div class="ut" style="left:936.90px;top:117.51px;font-size:12.34px;line-height:15.43px;color:#222228;transform:scaleX(0.8987);">Riassumi PDF</div>
<div class="ut" style="left:1059.65px;top:53.82px;font-size:11.92px;line-height:14.9px;color:#222228;transform:scaleX(0.9461);">Parla con PDF</div>
<div class="ut" style="left:1229.25px;top:53.82px;font-size:11.92px;line-height:14.9px;color:#222228;transform:scaleX(0.9545);">2008/2010</div>
<div class="ut" style="left:1070.70px;top:89.91px;font-size:10.80px;line-height:13.5px;color:#8b8e94;transform:scaleX(1.0753);">Contenuto generato da AI. Presta attenzione.</div>
<div class="ut" style="left:1136.28px;top:120.73px;font-size:13.04px;line-height:16.31px;color:#222226;transform:scaleX(1.0177);font-weight:700;">Scegli tipologia</div>
<div class="ut" style="left:1107.60px;top:150.65px;font-size:13.32px;line-height:16.66px;color:#222226;transform:scaleX(0.9982);">Parla con</div>
<div class="ut" style="left:1125.60px;top:169.91px;font-size:10.80px;line-height:13.5px;color:#222226;transform:scaleX(1.0000);">PDF</div>
<div class="ut" style="left:1207.51px;top:150.65px;font-size:13.32px;line-height:16.66px;color:#a8abb1;transform:scaleX(0.9927);">Parla con</div>
<div class="ut" style="left:1231.40px;top:172.90px;font-size:9.68px;line-height:12.1px;color:#c3c6cb;transform:scaleX(1.0778);">AI</div>
<div class="ut" style="left:1097.46px;top:195.50px;font-size:11.22px;line-height:14.03px;color:#303036;transform:scaleX(1.0432);">Inerenti a PDF/Non inerenti a PDF</div>
<div class="ut" style="left:1062.69px;top:234.25px;font-size:11.78px;line-height:14.73px;color:#222228;transform:scaleX(1.0058);">Ciao, sono Lumi, il tuo assistente AI. Come</div>
<div class="ut" style="left:1062.69px;top:249.25px;font-size:11.78px;line-height:14.73px;color:#222228;transform:scaleX(1.0099);">posso aiutarti oggi?</div>
<div class="ut" style="left:1062.83px;top:296.11px;font-size:12.34px;line-height:15.43px;color:#222228;transform:scaleX(0.8686);font-weight:700;">È possibile chiedere:</div>
<div class="ut" style="left:1091.60px;top:329.32px;font-size:11.92px;line-height:14.9px;color:#6f5fd3;transform:scaleX(1.0011);">D1. Puoi riassumere il contenuto di</div>
<div class="ut" style="left:1092.60px;top:347.92px;font-size:11.92px;line-height:14.9px;color:#6f5fd3;transform:scaleX(0.9138);">questi PDF?</div>
<div class="ut" style="left:1091.61px;top:386.82px;font-size:11.92px;line-height:14.9px;color:#6f5fd3;transform:scaleX(0.9892);">D2. Quali sono i punti chiave?</div>
<div class="ut" style="left:1123.68px;top:591.88px;font-size:12.06px;line-height:15.08px;color:#222228;transform:scaleX(0.9203);">DeepSeek-V3</div>
<div class="ut" style="left:1053.48px;top:623.72px;font-size:11.50px;line-height:14.38px;color:#9b9ea4;transform:scaleX(1.0249);">Fai una domanda sul PDF. Premi '#' per le</div>
<div class="ut" style="left:1053.47px;top:638.02px;font-size:11.50px;line-height:14.38px;color:#9b9ea4;transform:scaleX(1.0341);">richieste.</div>
<div class="ut" style="left:1074.50px;top:740.05px;font-size:12.30px;line-height:15.38px;color:#2a2a30;transform:scaleX(1.0007);">retro-choco-newspaper.pdf</div>
<div class="ut" style="left:1344.88px;top:410.78px;font-size:12.06px;line-height:15.08px;color:#222228;transform:scaleX(0.8200);">1</div>
<div class="ut" style="left:1343.90px;top:451.58px;font-size:12.06px;line-height:15.08px;color:#909399;transform:scaleX(0.9000);">1</div>
<div class="ut" style="left:1336.35px;top:650.51px;font-size:12.34px;line-height:15.43px;color:#222228;transform:scaleX(0.9478);">75%</div>
<!-- ===== END UITEXT ===== -->
</body></html>
